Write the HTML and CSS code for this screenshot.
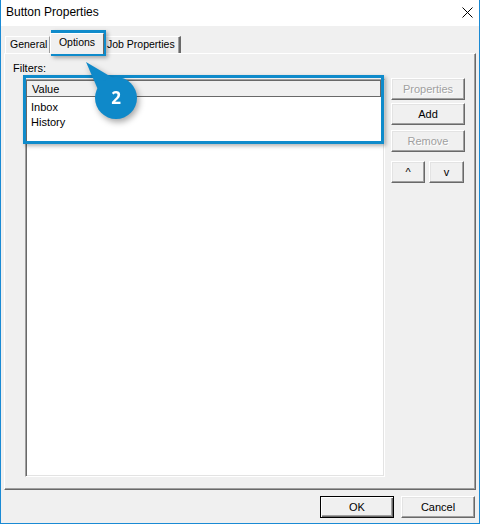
FILE: index.html
```html
<!DOCTYPE html>
<html lang="en">
<head>
  <meta charset="UTF-8" />
  <title>Button Properties</title>
  <link rel="stylesheet" href="styles.css">
</head>
<body>

  <div class="window">
    <div class="titlebar">
      <span class="title">Button Properties</span>
      <svg class="close" width="11" height="11" viewBox="0 0 11 11">
        <path d="M0.5 0.5 L10.5 10.5 M10.5 0.5 L0.5 10.5" stroke="#000" stroke-width="1" fill="none" />
      </svg>
    </div>

    <div class="dialog">
      <div class="tabs">
        <div class="tab tab-general">General</div>
        <div class="tab tab-options active">Options</div>
        <div class="tab tab-job">Job Properties</div>
      </div>

      <div class="panel">
        <div class="label">Filters:</div>
        <div class="panel-row">
          <div class="listbox">
            <div class="lb-header"><span>Value</span></div>
            <div class="lb-item">Inbox</div>
            <div class="lb-item">History</div>
          </div>
          <div class="side-buttons">
            <button class="btn disabled">Properties</button>
            <button class="btn btn-add">Add</button>
            <button class="btn disabled btn-remove">Remove</button>
            <div class="arrows">
              <button class="btn btn-small">^</button>
              <button class="btn btn-small">v</button>
            </div>
          </div>
        </div>
      </div>

      <div class="footer">
        <button class="btn default">OK</button>
        <button class="btn">Cancel</button>
      </div>
    </div>

    <!-- tutorial highlights -->
    <div class="highlight hl-tab"></div>
    <div class="highlight hl-list"></div>
    <svg class="callout" width="70" height="76" viewBox="0 0 70 76">
      <path d="M6 7 L19 37 L33 23 Z" fill="#0f89c9" />
      <circle cx="36" cy="43" r="21" fill="#0f89c9" />
      <text x="36" y="49" text-anchor="middle" class="callout-num">2</text>
    </svg>
  </div>

</body>
</html>
```

FILE: styles.css
```css
* {
  margin: 0; padding: 0; box-sizing: border-box;
}

body {
  font-family: 'Liberation Sans', Arial, sans-serif;
  font-size: 11px;
  color: #000;
  background: #fff;
}

.window {
  position: relative;
  width: 480px;
  height: 524px;
  border: 1px solid #1a8ad4;
  border-top: none;
  background: #f0f0f0;
  display: flex;
  flex-direction: column;
}

.titlebar {
  height: 26px;
  background: #fff;
  display: flex;
  align-items: center;
  justify-content: space-between;
  padding: 0 6px 2px 5px;
}

.title {
  font-size: 12px;
}

.close {
  margin-top: 1px;
}

.dialog {
  flex: 1;
  display: flex;
  flex-direction: column;
}

/* Tabs */
.tabs {
  height: 27px;
  display: flex;
  align-items: flex-end;
  padding-left: 4px;
}

.tab {
  height: 17px;
  font-size: 10.5px;
  line-height: 15px;
  white-space: nowrap;
  border-top: 1px solid #fff;
  border-left: 1px solid #fff;
  border-right: 1px solid #a0a0a0;
}

.tab-general {
  width: 45px;
  padding-left: 4px;
}

.tab-options {
  width: 54px;
  text-align: center;
}

.tab-job {
  width: 77px;
  padding-left: 3px;
  border-left: none;
  border-right: 2px solid #696969;
  box-shadow: inset -1px 0 #a0a0a0;
}

.tab.active {
  position: relative;
  z-index: 1;
  height: 21px;
  margin-bottom: -1px;
  line-height: 16px;
  background: #f0f0f0;
  border-right: 1px solid #696969;
}

/* Panel */
.panel {
  margin-left: 3px;
  width: 472px;
  height: 437px;
  border-top: 1px solid #fff;
  border-left: 1px solid #fff;
  border-right: 1px solid #696969;
  border-bottom: 1px solid #696969;
  box-shadow: inset -1px -1px #a0a0a0;
}

.label {
  margin-top: 8px;
  padding-left: 8px;
  line-height: 13px;
}

.panel-row {
  display: flex;
  gap: 6px;
  margin-top: 3px;
  padding-left: 20px;
}

.listbox {
  width: 360px;
  height: 398px;
  margin-top: 1px;
  background: #fff;
  border-top: 1px solid #a0a0a0;
  border-left: 1px solid #a0a0a0;
  border-right: 1px solid #fff;
  border-bottom: 1px solid #fff;
  box-shadow: inset 1px 1px #696969, inset -1px -1px #e3e3e3;
  padding: 1px 2px 0 1px;
}

.lb-header {
  height: 16px;
  background: #f0f0f0;
  border-bottom: 1px solid #696969;
  border-right: 2px solid #696969;
  padding-left: 5px;
  line-height: 16px;
  margin-bottom: 3px;
}

.lb-item {
  padding-left: 4px;
  line-height: 15px;
}

/* Buttons */
.side-buttons {
  display: flex;
  flex-direction: column;
  width: 74px;
}

.btn {
  height: 22px;
  width: 74px;
  font-family: 'Liberation Sans', Arial, sans-serif;
  font-size: 11px;
  color: #000;
  background: #f0f0f0;
  border-top: 1px solid #fff;
  border-left: 1px solid #fff;
  border-right: 1px solid #696969;
  border-bottom: 1px solid #696969;
  box-shadow: inset -1px -1px #a0a0a0, inset 1px 1px #e3e3e3;
}

.btn.disabled {
  color: #a0a0a0;
  text-shadow: 1px 1px #fff;
}

.btn-add { margin-top: 3px; }

.btn-remove { margin-top: 5px; }

.arrows {
  display: flex;
  gap: 4px;
  margin-top: 9px;
}

.btn-small {
  width: 35px;
}

.btn-small:first-child {
  width: 34px;
}

.footer {
  display: flex;
  justify-content: flex-end;
  gap: 7px;
  padding: 6px 4px 0 0;
}

.btn.default {
  border: 1px solid #000;
  box-shadow: inset 1px 1px #fff, inset -1px -1px #696969, inset -2px -2px #a0a0a0;
}

/* Tutorial overlays */
.highlight {
  position: absolute;
  border: 3px solid #0f8bcb;
  box-shadow: 2px 2px 4px rgba(0, 0, 0, 0.3);
}

.hl-tab {
  left: 50px;
  top: 30px;
  width: 55px;
  height: 26px;
}

.hl-list {
  left: 22px;
  top: 75px;
  width: 361px;
  height: 69px;
}

.callout {
  position: absolute;
  left: 79px;
  top: 55px;
  filter: drop-shadow(2px 3px 3px rgba(0, 0, 0, 0.35));
}

.callout-num {
  font-family: 'Open Sans', 'Liberation Sans', sans-serif;
  font-size: 17px;
  font-weight: 700;
  fill: #fff;
}
```
